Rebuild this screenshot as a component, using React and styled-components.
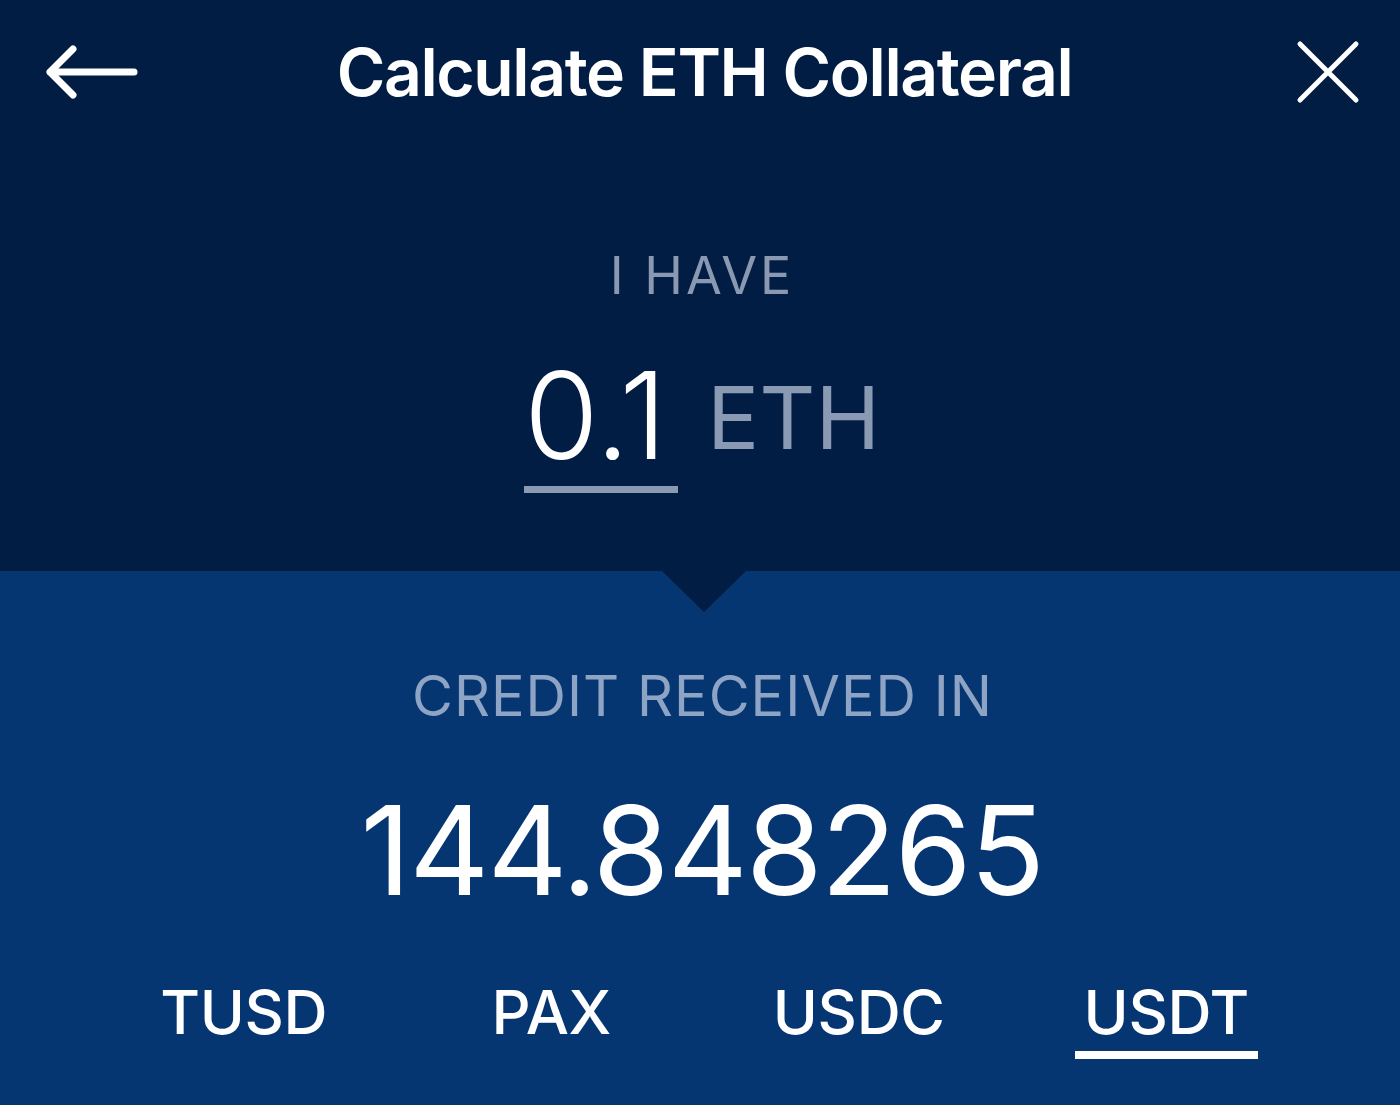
import React, { useState } from "react";
import styled, { createGlobalStyle } from "styled-components";

const GlobalStyle = createGlobalStyle`
  html, body {
    margin: 0;
    padding: 0;
    background: #021d44;
  }
  body {
    font-family: Inter, "Noto Sans", "Liberation Sans", sans-serif;
    -webkit-font-smoothing: antialiased;
  }
`;

const StScreen = styled.div`
  width: 1400px;
  height: 1105px;
  display: flex;
  flex-direction: column;
  overflow: hidden;
`;

const StTop = styled.section`
  height: 571px;
  background: #021d44;
  display: flex;
  flex-direction: column;
  align-items: center;
`;

const StHeader = styled.header`
  width: 100%;
  height: 144px;
  box-sizing: border-box;
  padding: 0 37px 0 40px;
  display: grid;
  grid-template-columns: 1fr auto 1fr;
  align-items: center;
`;

const StIconButton = styled.button`
  background: none;
  border: none;
  padding: 0;
  display: flex;
  cursor: pointer;
  justify-self: ${(props) => (props.$right ? "end" : "start")};
`;

const StTitle = styled.h1`
  margin: 0 0 0 6px;
  font-size: 66px;
  line-height: 1;
  font-weight: 600;
  color: #ffffff;
  letter-spacing: -1.4px;
`;

const StLabel = styled.div`
  font-size: ${(props) => props.$size}px;
  line-height: 1;
  font-weight: 400;
  letter-spacing: ${(props) => props.$spacing}px;
  color: ${(props) => props.$color};
  margin-top: ${(props) => props.$top}px;
  padding-left: ${(props) => props.$shift || 0}px;
  text-align: center;
`;

const StAmountRow = styled.div`
  margin-top: 53px;
  display: flex;
  align-items: flex-start;
  gap: 29px;
  padding-left: 4px;
`;

const StAmountInput = styled.div`
  min-width: 154px;
  box-sizing: border-box;
  padding-bottom: 10px;
  border-bottom: 7px solid #8a9ab3;
  font-size: 121px;
  line-height: 1;
  font-weight: 300;
  color: #ffffff;
`;

const StUnit = styled.div`
  margin-top: 19px;
  font-size: 87px;
  line-height: 1;
  font-weight: 400;
  color: #8a9ab3;
`;

const StBottom = styled.section`
  position: relative;
  flex: 1;
  background: #063672;
  display: flex;
  flex-direction: column;
  align-items: center;

  /* pointer notch hanging from the top panel */
  &::before {
    content: "";
    position: absolute;
    top: 0;
    left: 662px;
    border-left: 42px solid transparent;
    border-right: 42px solid transparent;
    border-top: 41px solid #021d44;
  }
`;

const StCredit = styled.div`
  margin-top: 64px;
  font-size: 124px;
  line-height: 1;
  font-weight: 400;
  letter-spacing: -1.8px;
  color: #ffffff;
  padding-left: 4px;
`;

const StTabs = styled.nav`
  margin-top: 70px;
  width: 100%;
  box-sizing: border-box;
  padding: 0 80px 0 90px;
  display: grid;
  grid-template-columns: repeat(4, 1fr);
  justify-items: center;
`;

const StTab = styled.button`
  background: none;
  border: none;
  margin: 0;
  padding: 0 9px 8px;
  border-bottom: 8px solid
    ${(props) => (props.$active ? "#ffffff" : "transparent")};
  font-family: inherit;
  font-size: 61px;
  line-height: 1;
  font-weight: 500;
  letter-spacing: -0.3px;
  color: #ffffff;
  cursor: pointer;
`;

const currencies = ["TUSD", "PAX", "USDC", "USDT"];

function BackArrow() {
  return (
    <svg width="100" height="64" viewBox="0 0 100 64" fill="none">
      <path
        d="M94 32H10M33 9L10 32L33 55"
        stroke="#fff"
        strokeWidth="7"
        strokeLinecap="round"
        strokeLinejoin="round"
      />
    </svg>
  );
}

function CloseIcon() {
  return (
    <svg width="70" height="70" viewBox="0 0 70 70" fill="none">
      <path
        d="M7 7L63 63M63 7L7 63"
        stroke="#fff"
        strokeWidth="5"
        strokeLinecap="round"
      />
    </svg>
  );
}

export default function App() {
  const [selected, setSelected] = useState("USDT");

  return (
    <>
      <GlobalStyle />
      <StScreen>
        <StTop>
          <StHeader>
            <StIconButton aria-label="Back">
              <BackArrow />
            </StIconButton>
            <StTitle>Calculate ETH Collateral</StTitle>
            <StIconButton $right aria-label="Close">
              <CloseIcon />
            </StIconButton>
          </StHeader>
          <StLabel $size={52} $spacing={3} $color="#8a99b1" $top={106} $shift={4}>
            I HAVE
          </StLabel>
          <StAmountRow>
            <StAmountInput>0.1</StAmountInput>
            <StUnit>ETH</StUnit>
          </StAmountRow>
        </StTop>
        <StBottom>
          <StLabel $size={56} $spacing={1} $color="#8ea4c4" $top={97} $shift={5}>
            CREDIT RECEIVED IN
          </StLabel>
          <StCredit>144.848265</StCredit>
          <StTabs>
            {currencies.map((c) => (
              <StTab
                key={c}
                $active={selected === c}
                onClick={() => setSelected(c)}
              >
                {c}
              </StTab>
            ))}
          </StTabs>
        </StBottom>
      </StScreen>
    </>
  );
}
